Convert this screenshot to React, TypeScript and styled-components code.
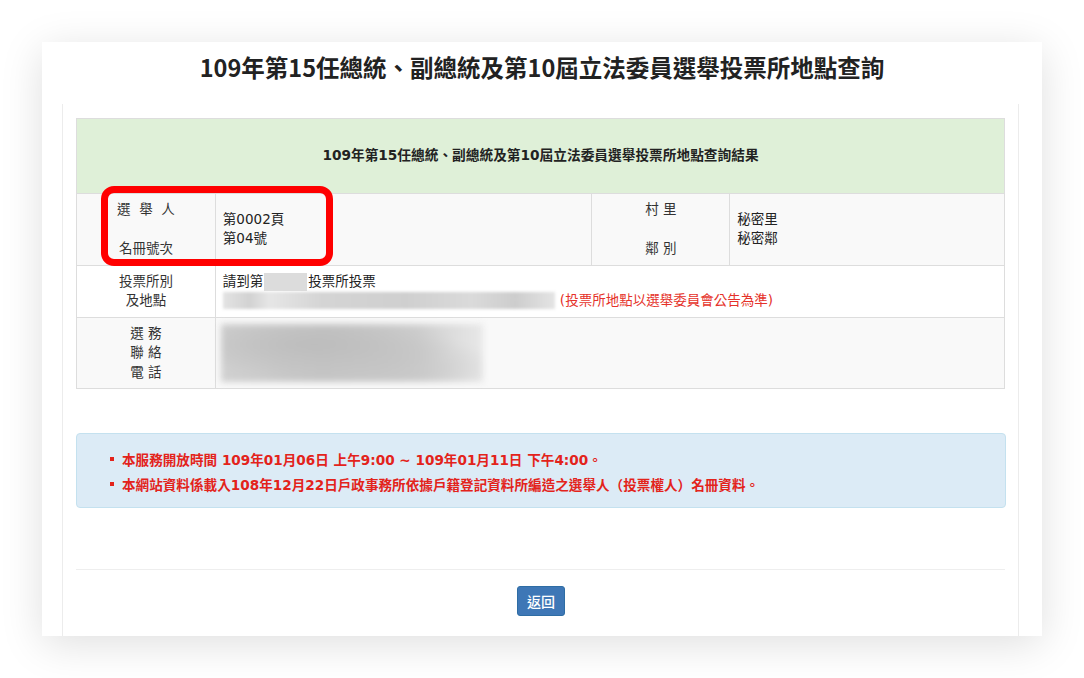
import styled, { createGlobalStyle } from 'styled-components';

const GlobalStyle = createGlobalStyle`
  html, body {
    margin: 0;
    padding: 0;
    background: #ffffff;
  }
  body {
    font-family: "DejaVu Sans", "Noto Sans CJK TC", sans-serif;
    color: #333;
  }
`;

const Page = styled.div`
  width: 1084px;
  height: 678px;
  padding: 42px;
  box-sizing: border-box;
  overflow: hidden;
`;

const Card = styled.div`
  width: 1000px;
  height: 594px;
  background: #fff;
  box-shadow: 0 8px 40px rgba(0, 0, 0, 0.13);
  display: flex;
  flex-direction: column;
`;

const Title = styled.h1`
  flex-shrink: 0;
  margin: 0;
  height: 62px;
  box-sizing: border-box;
  padding-top: 10px;
  line-height: 30px;
  text-align: center;
  font-family: "Noto Sans CJK TC", sans-serif;
  font-size: 23.5px;
  font-weight: 700;
  color: #222;
`;

const Panel = styled.div`
  flex: 1;
  min-height: 0;
  margin: 0 23px 0 20px;
  border-left: 1px solid #ececec;
  border-right: 1px solid #ececec;
  padding: 14px 12px 0 13px;
  display: flex;
  flex-direction: column;
`;

const TableWrap = styled.div`
  position: relative;
`;

const Table = styled.table`
  width: 929px;
  border-collapse: collapse;
  font-size: 13.5px;
  line-height: 19.5px;
  color: #333;
`;

const HeadCell = styled.th`
  height: 75px;
  padding: 0;
  box-sizing: border-box;
  background: #dff0d8;
  border: 1px solid #ddd;
  font-size: 13.7px;
  font-weight: 700;
  color: #222;
  text-align: center;
  vertical-align: middle;
`;

const Row = styled.tr<{ $striped?: boolean }>`
  background: ${(p) => (p.$striped ? '#f9f9f9' : '#fff')};
`;

const Label = styled.td`
  border: 1px solid #ddd;
  padding: 6px 8px;
  text-align: center;
  vertical-align: middle;
  color: #333;
`;

const Value = styled.td`
  border: 1px solid #ddd;
  padding: 6px 7px;
  text-align: left;
  vertical-align: middle;
  color: #222;
`;

const Highlight = styled.div`
  position: absolute;
  left: 25px;
  top: 68px;
  width: 232px;
  height: 80px;
  box-sizing: border-box;
  border: 7px solid #ff0000;
  border-radius: 13px;
  pointer-events: none;
`;

const Mask = styled.span<{ $w: number }>`
  display: inline-block;
  width: ${(p) => p.$w}px;
  height: 18px;
  vertical-align: middle;
  background: #dcdcdc;
  margin: 0 1px;
`;

const Line = styled.div`
  display: flex;
  align-items: center;
  gap: 5px;
`;

const BlurBar = styled.div`
  width: 332px;
  height: 17px;
  background: linear-gradient(
    90deg,
    #e3e3e3 0%,
    #d2d2d2 8%,
    #e6e6e6 14%,
    #d4d4d4 30%,
    #cfcfcf 55%,
    #dadada 75%,
    #cdcdcd 88%,
    #e4e4e4 100%
  );
  filter: blur(1.5px);
`;

const Notice = styled.span`
  color: #e5322a;
`;

const BlurBlock = styled.div`
  width: 262px;
  height: 58px;
  margin-left: -2px;
  background:
    radial-gradient(ellipse at 35% 35%, #bdbdbd 0%, transparent 60%),
    radial-gradient(ellipse at 60% 75%, #c6c6c6 0%, transparent 55%),
    linear-gradient(90deg, #d0d0d0 0%, #c4c4c4 40%, #cfcfcf 75%, #e8e8e8 100%);
  filter: blur(3px);
`;

const Alert = styled.div`
  margin-top: 44px;
  height: 75px;
  box-sizing: border-box;
  background: #dcebf6;
  border: 1px solid #c4e1ef;
  border-radius: 4px;
  padding: 12px 0 12px 33px;
`;

const Item = styled.div`
  display: flex;
  align-items: center;
  gap: 8px;
  height: 25px;
  font-size: 13.6px;
  font-weight: 700;
  color: #e3231b;
`;

const Bullet = styled.span`
  width: 4px;
  height: 4px;
  background: #e3231b;
`;

const Divider = styled.hr`
  margin: 61px 0 0;
  border: 0;
  border-top: 1px solid #eee;
  width: 929px;
`;

const Footer = styled.div`
  margin-top: 16px;
  display: flex;
  justify-content: center;
`;

const Button = styled.button`
  height: 30px;
  padding: 0 9px;
  font-family: "Noto Sans CJK TC", sans-serif;
  font-size: 14px;
  font-weight: 500;
  color: #fff;
  background: #3e77b6;
  border: 1px solid #2e6da4;
  border-radius: 3px;
  cursor: pointer;
`;

export default function App() {
  return (
    <Page>
      <GlobalStyle />
      <Card>
        <Title>109年第15任總統、副總統及第10屆立法委員選舉投票所地點查詢</Title>
        <Panel>
          <TableWrap>
            <Table>
              <colgroup>
                <col style={{ width: 139 }} />
                <col style={{ width: 377 }} />
                <col style={{ width: 138 }} />
                <col style={{ width: 275 }} />
              </colgroup>
              <thead>
                <tr>
                  <HeadCell colSpan={4}>
                    109年第15任總統、副總統及第10屆立法委員選舉投票所地點查詢結果
                  </HeadCell>
                </tr>
              </thead>
              <tbody>
                <Row $striped>
                  <Label>
                    選&nbsp;&nbsp;舉&nbsp;&nbsp;人
                    <br />
                    <br />
                    名冊號次
                  </Label>
                  <Value>
                    第0002頁
                    <br />
                    第04號
                  </Value>
                  <Label>
                    村 里
                    <br />
                    <br />
                    鄰 別
                  </Label>
                  <Value>
                    秘密里
                    <br />
                    秘密鄰
                  </Value>
                </Row>
                <Row>
                  <Label>
                    投票所別
                    <br />
                    及地點
                  </Label>
                  <Value colSpan={3}>
                    <Line>
                      <span>
                        請到第<Mask $w={43} />投票所投票
                      </span>
                    </Line>
                    <Line>
                      <BlurBar />
                      <Notice>(投票所地點以選舉委員會公告為準)</Notice>
                    </Line>
                  </Value>
                </Row>
                <Row $striped>
                  <Label>
                    選 務
                    <br />
                    聯 絡
                    <br />
                    電 話
                  </Label>
                  <Value colSpan={3}>
                    <BlurBlock />
                  </Value>
                </Row>
              </tbody>
            </Table>
            <Highlight />
          </TableWrap>
          <Alert>
            <Item>
              <Bullet />
              本服務開放時間 109年01月06日 上午9:00 ~ 109年01月11日 下午4:00。
            </Item>
            <Item>
              <Bullet />
              本網站資料係載入108年12月22日戶政事務所依據戶籍登記資料所編造之選舉人（投票權人）名冊資料。
            </Item>
          </Alert>
          <Divider />
          <Footer>
            <Button>返回</Button>
          </Footer>
        </Panel>
      </Card>
    </Page>
  );
}
